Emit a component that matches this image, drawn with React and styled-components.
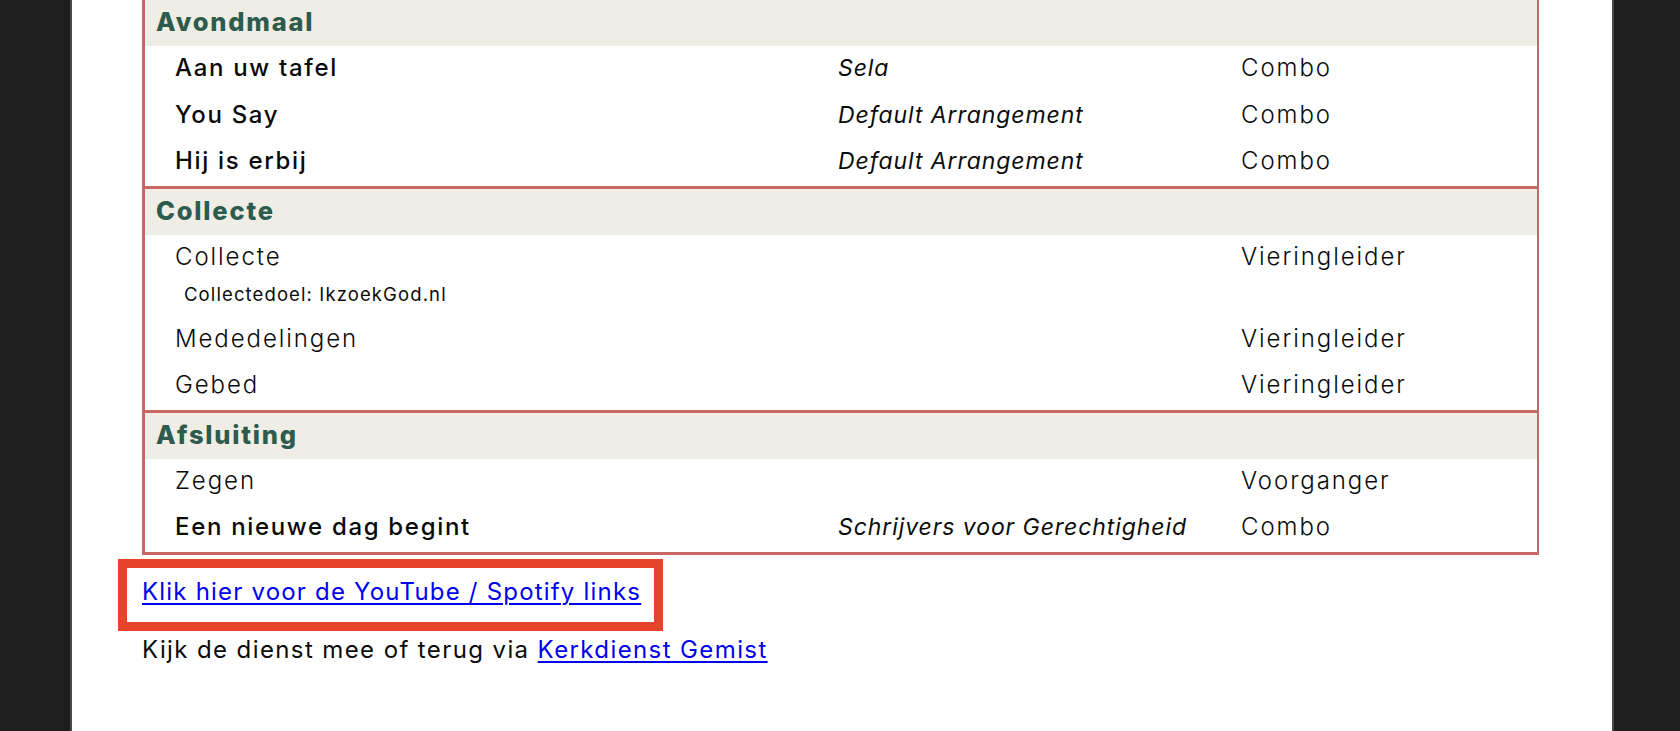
import React from 'react';
import styled, { createGlobalStyle } from 'styled-components';

const GlobalStyle = createGlobalStyle`
  html, body {
    margin: 0;
    padding: 0;
    background: #1e1e1e;
  }

  body {
    font-family: Inter, "DejaVu Sans", sans-serif;
    color: #0b0b0b;
  }
`;

const sections = [
  {
    title: 'Avondmaal',
    items: [
      { name: 'Aan uw tafel', song: true, arrangement: 'Sela', role: 'Combo' },
      { name: 'You Say', song: true, arrangement: 'Default Arrangement', role: 'Combo' },
      { name: 'Hij is erbij', song: true, arrangement: 'Default Arrangement', role: 'Combo' },
    ],
  },
  {
    title: 'Collecte',
    items: [
      { name: 'Collecte', note: 'Collectedoel: IkzoekGod.nl', role: 'Vieringleider' },
      { name: 'Mededelingen', role: 'Vieringleider' },
      { name: 'Gebed', role: 'Vieringleider' },
    ],
  },
  {
    title: 'Afsluiting',
    items: [
      { name: 'Zegen', role: 'Voorganger' },
      {
        name: 'Een nieuwe dag begint',
        song: true,
        arrangement: 'Schrijvers voor Gerechtigheid',
        role: 'Combo',
      },
    ],
  },
];

const App = () => {
  return (
    <>
      <GlobalStyle />
      <Page>
        <Schedule>
          {sections.map((section) => (
            <Section key={section.title}>
              <SectionHeader>{section.title}</SectionHeader>
              {section.items.map((item) => (
                <Row key={item.name}>
                  <Cell>
                    <Title $song={item.song}>{item.name}</Title>
                    {item.note && <Note>{item.note}</Note>}
                  </Cell>
                  <Arrangement>{item.arrangement}</Arrangement>
                  <Role>{item.role}</Role>
                </Row>
              ))}
            </Section>
          ))}
        </Schedule>

        <Links>
          <Highlighted>
            <TextLink href="#links">Klik hier voor de YouTube / Spotify links</TextLink>
          </Highlighted>
          <Line>
            Kijk de dienst mee of terug via <TextLink href="#gemist">Kerkdienst Gemist</TextLink>
          </Line>
        </Links>
      </Page>
    </>
  );
};

export default App;

const Page = styled.main`
  box-sizing: border-box;
  width: 1544px;
  min-height: 731px;
  margin-left: 70px;
  padding: 0 73px 0 70px;
  background: #fff;
  border-left: 2px solid #4a4a4a;
  border-right: 2px solid #4a4a4a;
  overflow: hidden;
`;

const Schedule = styled.div`
  border-left: 3px solid #c96666;
  border-right: 2px solid #c96666;
  border-bottom: 3px solid #c96666;
`;

const Section = styled.section`
  & + & {
    border-top: 3px solid #c96666;
  }
`;

const SectionHeader = styled.div`
  box-sizing: border-box;
  display: flex;
  align-items: center;
  height: 46px;
  padding: 0 0 3px 11px;
  background: #f0ede6;
  color: #2d5b4d;
  font-size: 25.5px;
  font-weight: 800;
  letter-spacing: 0.07em;
`;

const Row = styled.div`
  display: grid;
  grid-template-columns: 663px 403px 1fr;
  align-items: start;
  padding-left: 30px;
  font-size: 24px;
  line-height: 44.5px;
`;

const Cell = styled.div`
  display: flex;
  flex-direction: column;
`;

const Title = styled.span`
  padding-bottom: 2px;
  font-weight: ${(p) => (p.$song ? 500 : 300)};
  letter-spacing: ${(p) => (p.$song ? '0.07em' : '0.08em')};
  color: #0a0a0a;
`;

const Note = styled.span`
  padding: 0 0 9.5px 9px;
  font-size: 18.5px;
  font-weight: 400;
  line-height: 26px;
  letter-spacing: 0.06em;
`;

const Arrangement = styled.span`
  font-size: 23px;
  font-style: italic;
  font-weight: 400;
  letter-spacing: 0.04em;
`;

const Role = styled.span`
  font-weight: 300;
  letter-spacing: 0.08em;
`;

const Links = styled.div`
  padding-top: 20px;
  font-size: 24px;
  line-height: 33px;
  letter-spacing: 0.05em;
  color: #0b0b0b;
`;

const Highlighted = styled.p`
  position: relative;
  display: inline-block;
  margin: 0;

  &::after {
    content: '';
    position: absolute;
    top: -16px;
    right: -22px;
    bottom: -23px;
    left: -24px;
    border: 9px solid #e8432b;
    pointer-events: none;
  }
`;

const Line = styled.p`
  margin: 25px 0 0;
  letter-spacing: 0.058em;
`;

const TextLink = styled.a`
  color: #0000ee;
  text-decoration: underline;
  text-decoration-thickness: 2px;
  text-underline-offset: 3px;
`;
